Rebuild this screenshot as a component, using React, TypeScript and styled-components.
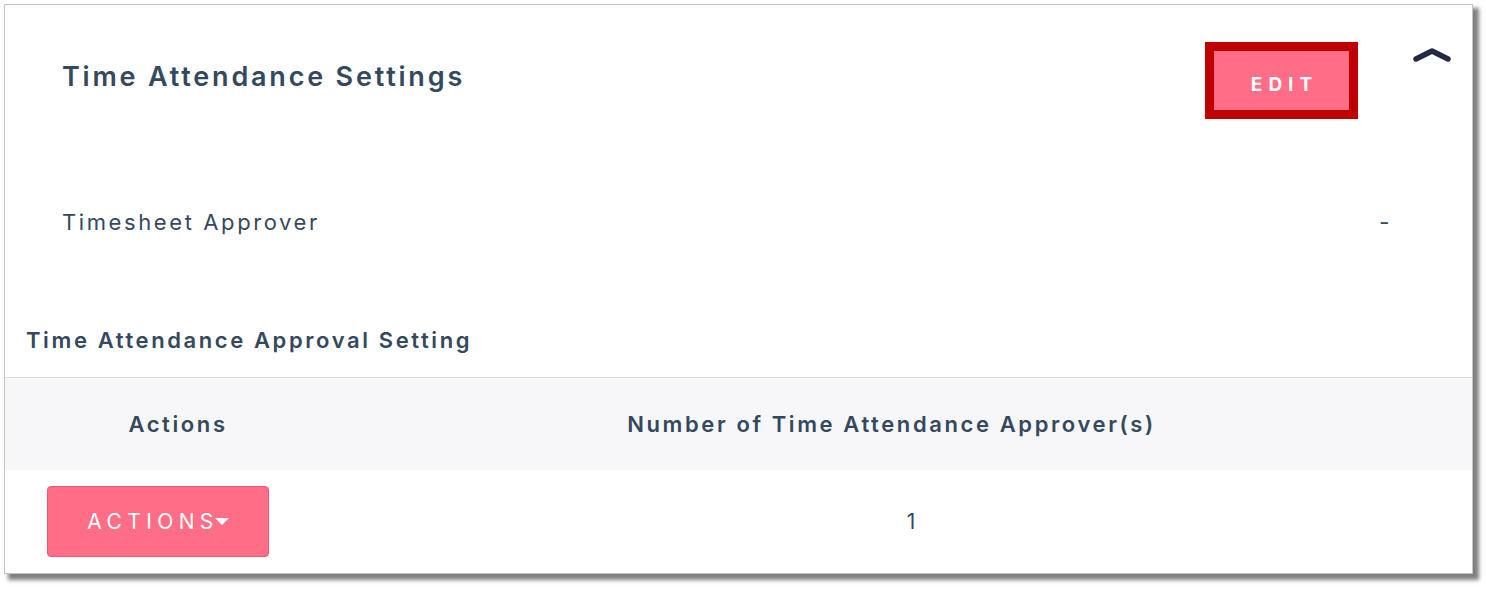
import React from 'react';
import styled, { createGlobalStyle } from 'styled-components';

const GlobalStyle = createGlobalStyle`
  html, body {
    margin: 0;
    padding: 0;
    background: #fff;
  }
  body {
    min-height: 590px;
    font-family: 'Inter', 'Open Sans', sans-serif;
    color: #34495e;
  }
  * {
    box-sizing: border-box;
  }
`;

const Page = styled.main`
  padding: 4px 0 16px 4px;
`;

const Panel = styled.section`
  width: 1469px;
  height: 570px;
  background: #fff;
  border: 1px solid #c4c4c4;
  box-shadow: 5px 5px 4px 1px rgba(0, 0, 0, 0.5);
  display: flex;
  flex-direction: column;
`;

const Header = styled.div`
  display: flex;
  align-items: flex-start;
  padding: 37px 21px 0 57px;
`;

const Title = styled.h2`
  flex: 1;
  margin: 0;
  font-size: 27px;
  line-height: 70px;
  font-weight: 600;
  letter-spacing: 2.8px;
`;

const EditButton = styled.button`
  width: 153px;
  height: 77px;
  border: 9px solid #c00000;
  background: #ff6d87;
  color: #fff;
  font-family: inherit;
  font-size: 19px;
  font-weight: 700;
  letter-spacing: 6px;
  padding: 7px 0 0 6px;
  cursor: pointer;
`;

const CollapseToggle = styled.button`
  margin: 6px 0 0 55px;
  padding: 0;
  border: none;
  background: none;
  width: 38px;
  height: 14px;
  display: flex;
  cursor: pointer;
`;

const DetailRow = styled.div`
  display: flex;
  justify-content: space-between;
  align-items: center;
  margin-top: 81px;
  height: 44px;
  padding: 0 80px 0 57px;
  font-size: 22px;
  letter-spacing: 2.6px;
`;

const SectionTitle = styled.h3`
  margin: 74px 0 15px;
  padding-left: 21px;
  height: 44px;
  line-height: 44px;
  font-size: 22px;
  font-weight: 600;
  letter-spacing: 2.6px;
`;

const Table = styled.div`
  display: grid;
  grid-template-columns: 346px 1fr;
  grid-template-rows: 92px 1fr;
  border-top: 1px solid #dcdcdc;
  flex: 1;
`;

const HeadCell = styled.div<{ $padRight?: number }>`
  background: #f7f7f9;
  display: flex;
  align-items: center;
  justify-content: center;
  padding-right: ${p => p.$padRight ?? 0}px;
  font-size: 22px;
  font-weight: 600;
  letter-spacing: 2.6px;
`;

const BodyCell = styled.div<{ $align?: string }>`
  display: flex;
  align-items: flex-start;
  justify-content: ${p => p.$align ?? 'center'};
  padding: 16px 0 0 ${p => (p.$align === 'flex-start' ? 42 : 0)}px;
  font-size: 21px;
  letter-spacing: 1px;
`;

const NumberText = styled.span`
  line-height: 71px;
`;

const ActionsButton = styled.button`
  width: 222px;
  height: 71px;
  background: #ff6d87;
  border: 1px solid #f2566f;
  border-radius: 4px;
  color: #fff;
  font-family: inherit;
  font-size: 21px;
  font-weight: 400;
  letter-spacing: 5.4px;
  display: flex;
  align-items: center;
  justify-content: center;
  padding: 0;
  cursor: pointer;
`;

const Caret = styled.span`
  width: 0;
  height: 0;
  border-left: 7px solid transparent;
  border-right: 7px solid transparent;
  border-top: 7px solid #fff;
  margin-left: -4px;
`;

export default function App() {
  return (
    <Page>
      <GlobalStyle />
      <Panel>
        <Header>
          <Title>Time Attendance Settings</Title>
          <EditButton>EDIT</EditButton>
          <CollapseToggle aria-label="Collapse">
            <svg width="38" height="14" viewBox="0 0 38 14">
              <path
                d="M3 11 L19 3 L35 11"
                fill="none"
                stroke="#232a44"
                strokeWidth="5.5"
                strokeLinecap="round"
                strokeLinejoin="round"
              />
            </svg>
          </CollapseToggle>
        </Header>
        <DetailRow>
          <span>Timesheet Approver</span>
          <span>-</span>
        </DetailRow>
        <SectionTitle>Time Attendance Approval Setting</SectionTitle>
        <Table>
          <HeadCell>Actions</HeadCell>
          <HeadCell $padRight={40}>Number of Time Attendance Approver(s)</HeadCell>
          <BodyCell $align="flex-start">
            <ActionsButton>
              ACTIONS
              <Caret />
            </ActionsButton>
          </BodyCell>
          <BodyCell>
            <NumberText>1</NumberText>
          </BodyCell>
        </Table>
      </Panel>
    </Page>
  );
}
